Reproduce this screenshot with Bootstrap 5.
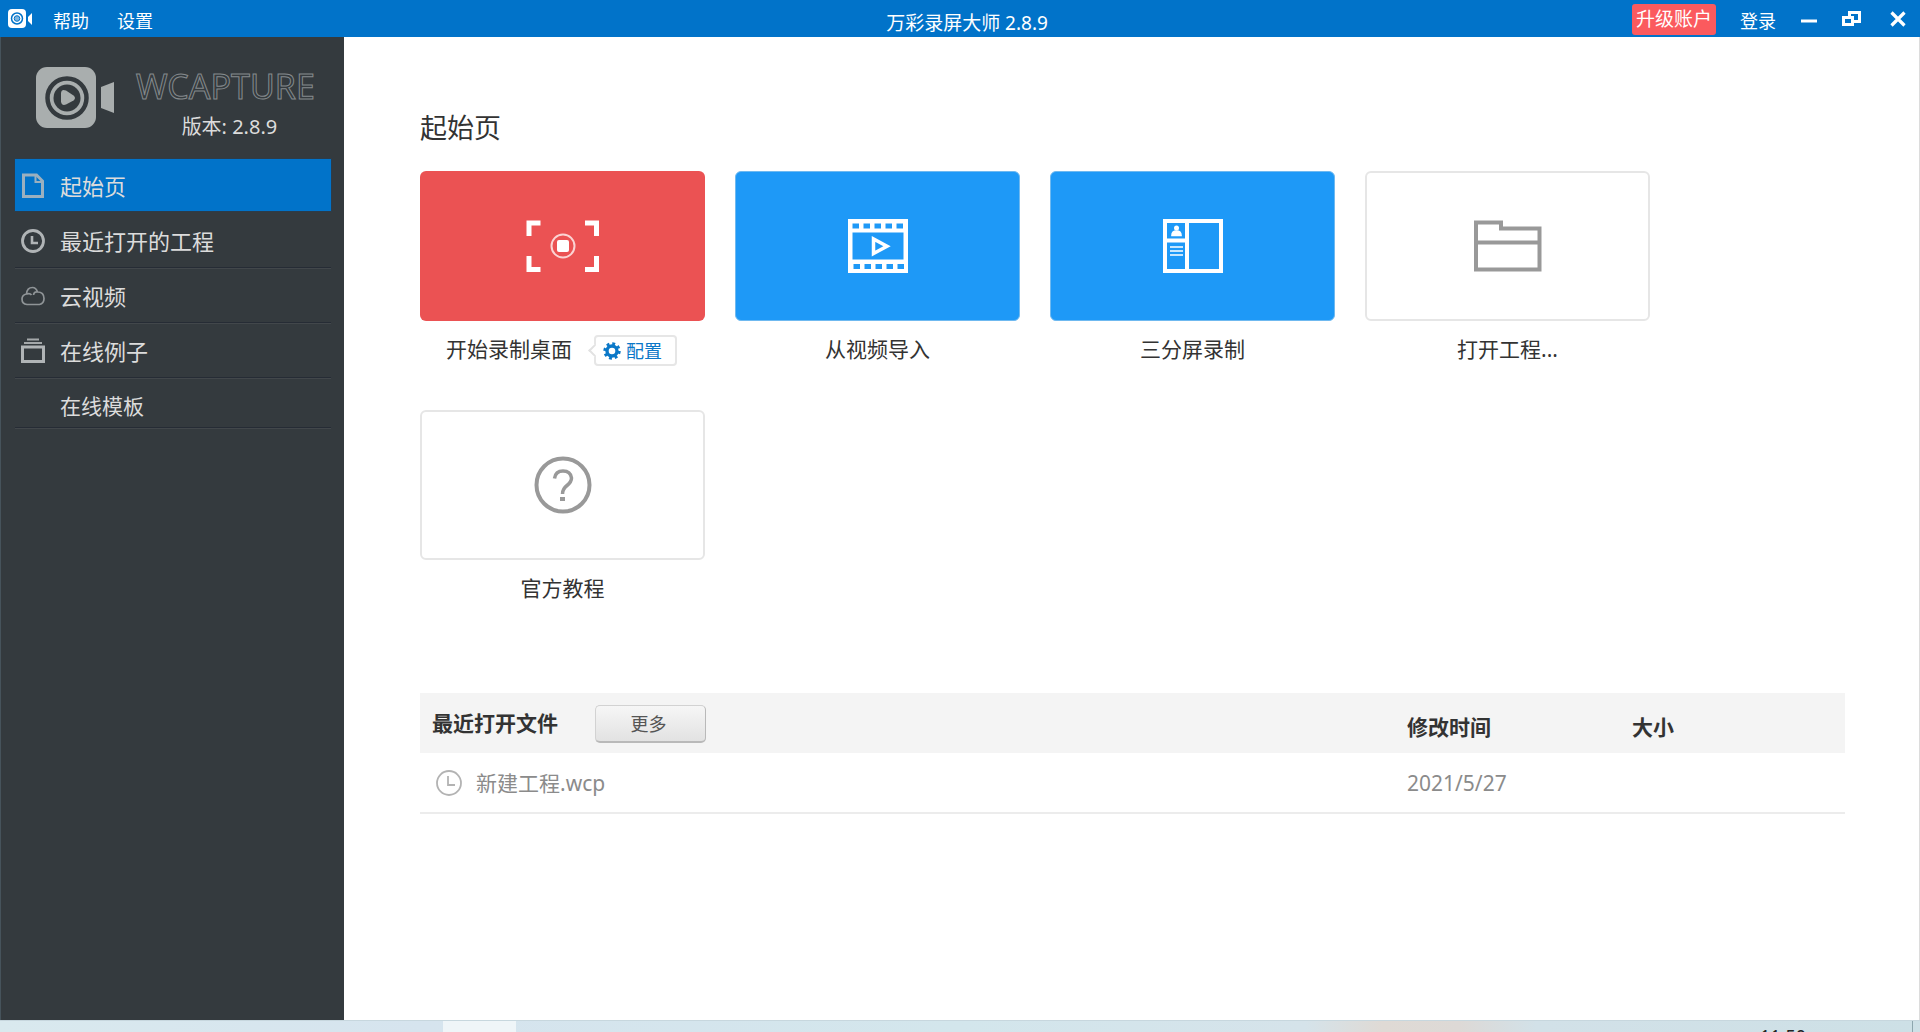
<!DOCTYPE html>
<html lang="zh-CN">
<head>
<meta charset="utf-8">
<meta name="viewport" content="width=device-width, initial-scale=1">
<title>万彩录屏大师 2.8.9</title>
<link href="https://cdn.jsdelivr.net/npm/bootstrap@5.3.0/dist/css/bootstrap.min.css" rel="stylesheet">
<style>
body{font-family:"Noto Sans","Noto Sans CJK SC",sans-serif;font-size:21px;color:#333;background:#fff;line-height:30px}
svg{display:block;flex:none}
button{font-family:inherit}
.titlebar{display:grid;grid-template-columns:1fr auto 1fr;align-items:center;height:37px;background:#0173c9;color:#fff;font-size:18px}
.titlebar a{color:#fff;text-decoration:none}
.titlebar .app-name{font-size:19px;padding:8px 0 0 14px}
.win-btn{background:none;border:0;padding:0;color:#fff}
.window-tools{padding-right:14px}
.upgrade{background:#fb5a5e;color:#fff;border:0;border-radius:3px;font-size:19px;line-height:31px;padding:0 4px;height:31px}
.sidebar{width:344px;flex:none;background:#343a3e;padding:30px 13px 0 14px;border-left:1px solid #46535b}
.brand{padding-left:21px;height:92px}
.brand-name{font-size:34px;line-height:38px;color:transparent;-webkit-text-stroke:1px #858a8d}
.version{font-size:20px;line-height:28px;padding-top:8px;color:#dcdcdc}
.side-link{display:flex;align-items:center;gap:15px;height:55px;padding:2px 0 0 6px;font-size:22px;color:#dcdcdc;text-decoration:none;border-bottom:1px solid #262c35;box-shadow:0 1px 0 #42474b}
.side-link svg{width:24px}
.side-link.on{height:52px;margin-bottom:2px;background:#0173c9;border:0;box-shadow:0 0 0 1px #2c3c4a}
.side-link.sub{height:50px;font-size:21px;padding:6px 0 0 45px}
.content{padding:68px 74px 0 76px;border-right:1px solid #dcdcdc}
.page-title{font-size:27px;line-height:46px;margin:0 0 20px;font-weight:400}
.tiles{display:flex;flex-wrap:wrap;gap:30px}
.tile{width:285px}
.tile-btn{display:flex;align-items:center;justify-content:center;width:100%;height:150px;border-radius:6px;border:2px solid #e6e6e6;background:#fff;color:#999}
.tile-btn.red{background:#eb5253;border:0;color:#fff}
.tile-btn.blue{background:#1e99f7;border:1px solid #6fb9f0;color:#fff}
.tile-label{display:flex;align-items:center;justify-content:center;gap:22px;height:59px;padding-bottom:3px}
.config{position:relative;display:flex;align-items:center;gap:5px;height:31px;width:83px;margin:3px 2px 0 0;padding:0 0 0 7px;border:2px solid #e6e6e6;border-radius:4px;background:#fff;color:#0b78c8;font-size:18px}
.config::before{content:"";position:absolute;left:-6px;top:9px;width:9px;height:9px;background:#fff;border:solid #e2e2e2;border-width:0 0 2px 2px;transform:rotate(45deg)}
.recent{margin-top:74px;width:100%;table-layout:fixed}
.recent th{background:#f4f4f4;height:60px;padding:0;vertical-align:middle}
.recent th.low{padding-top:8px}
.recent td{height:60px;padding:0;color:#8b8b8b;border-bottom:2px solid #ececec}
.recent-head{gap:37px;padding-left:12px}
.recent-file{gap:14px}
.c-date{width:225px}.c-size{width:213px}
.more{width:111px;height:38px;margin-top:2px;padding:0 10px 0 6px;border:1px solid #d2d2d2;border-right-color:#b9b9b9;border-bottom:2px solid #b9b9b9;border-radius:5px;background:linear-gradient(#f6f6f6,#e2e2e2);color:#555;font-size:18px;font-weight:400;line-height:30px}
.taskbar{height:12px;overflow:hidden;border-top:1px solid #c7d7de;background:linear-gradient(90deg,#d9e9ee,#d6e4ee 22%,#d3e6ec 50%,#d5e3ea 68%,#dfdad5 72%,#ddd9d6 76%,#d2e1e8 80%,#cde0e6)}
.task{width:73px;margin-left:443px;background:#eff5f8}
.clock{font-size:18px;line-height:22px;color:#222;padding:4px 106px 0 0;margin-right:7px;border-right:1px solid #8da6ae}
</style>
<script src="https://cdn.jsdelivr.net/npm/bootstrap@5.3.0/dist/js/bootstrap.bundle.min.js"></script>
</head>
<body class="d-flex flex-column min-vh-100">
<header class="titlebar">
  <nav class="d-flex align-items-center ps-2">
    <svg width="25" height="20" viewBox="0 0 25 20"><rect x="0" y="0" width="18" height="19" rx="4" fill="#fff"/><circle cx="9" cy="9.500" r="5.500" fill="none" stroke="#0173c9" stroke-width="1.500"/><circle cx="9" cy="9.500" r="2.800" fill="#7fb6e0" stroke="#0173c9"/><path d="M20 8l4-4v12l-4-4z" fill="#fff"/></svg>
    <a href="#" class="ms-3 ps-1 pt-1">帮助</a>
    <a href="#" class="ms-4 ps-1 pt-1">设置</a>
  </nav>
  <div class="app-name">万彩录屏大师 2.8.9</div>
  <div class="window-tools d-flex align-items-center justify-content-end">
    <button class="upgrade" type="button">升级账户</button>
    <a href="#" class="ms-4 pt-1 me-4">登录</a>
    <button class="win-btn" type="button" aria-label="最小化"><svg width="18" height="16" viewBox="0 0 18 16"><path d="M1 10h16" stroke="#fff" stroke-width="3"/></svg></button>
    <button class="win-btn ms-4" type="button" aria-label="还原"><svg width="20" height="16" viewBox="0 0 20 16"><path d="M7.500 5V1.500h10v9H12M1.500 6.500h9v7h-9z" fill="none" stroke="#fff" stroke-width="3"/></svg></button>
    <button class="win-btn ms-4 ps-1" type="button" aria-label="关闭"><svg width="16" height="16" viewBox="0 0 16 16"><path d="M1.500 1.500l13 13M14.500 1.500l-13 13" stroke="#fff" stroke-width="3.200"/></svg></button>
  </div>
</header>
<div class="d-flex flex-grow-1">
  <aside class="sidebar">
    <div class="brand d-flex">
      <svg width="80" height="62" viewBox="0 0 80 62"><rect x="0" y="0" width="60" height="61" rx="11" fill="#a9aeae"/><circle cx="31" cy="31" r="19.500" fill="none" stroke="#343a3e" stroke-width="4.500"/><circle cx="31" cy="31" r="13.500" fill="#343a3e"/><path d="M25 26q.5-4.500 5-2.500l7.500 5q3 2.500 0 5l-7.500 4q-4.500 1.500-5-3z" fill="#a9aeae"/><path d="M65 20l13-5v31l-13-5z" fill="#a9aeae"/></svg>
      <div class="ms-3 ps-1">
        <div class="brand-name">WCAPTURE</div>
        <div class="version text-center ps-2">版本: 2.8.9</div>
      </div>
    </div>
    <nav>
      <a class="side-link on" href="#"><svg width="24" height="26" viewBox="0 0 24 26"><path d="M2.500 2h13l6 6v15.500h-19z" fill="none" stroke="#9bb0bf" stroke-width="3"/><path d="M14.500 2v7h7" fill="none" stroke="#9bb0bf" stroke-width="2"/></svg>起始页</a>
      <a class="side-link" href="#"><svg height="26" viewBox="0 0 24 26"><circle cx="12" cy="13" r="10.500" fill="none" stroke="#b0b4b6" stroke-width="2.800"/><path d="M11 8v7h6" fill="none" stroke="#b0b4b6" stroke-width="2.600"/></svg>最近打开的工程</a>
      <a class="side-link" href="#"><svg height="20" viewBox="0 0 24 20"><path d="M6 18.500Q1 18 1 13q0-4 4.500-5Q6 1.500 11.500 1.500q3.500 0 5 4.500 6.500 0 6.500 6.500 0 5-4.500 6zM6 8q3-1 4.500 1M16.500 6q-3.500-.5-4 3" fill="none" stroke="#8f9497" stroke-width="1.700"/></svg>云视频</a>
      <a class="side-link" href="#"><svg height="26" viewBox="0 0 24 26"><path d="M6 1.500h12M3 5h18" stroke="#a4a8aa" stroke-width="1.800"/><path d="M1.500 9h21v14.500h-21z" fill="none" stroke="#b0b4b6" stroke-width="3"/></svg>在线例子</a>
      <a class="side-link sub" href="#">在线模板</a>
    </nav>
  </aside>
  <main class="content flex-grow-1">
    <h1 class="page-title">起始页</h1>
    <div class="tiles">
      <div class="tile">
        <button class="tile-btn red" type="button" aria-label="开始录制桌面"><svg width="74" height="52" viewBox="0 0 74 52"><path d="M3 16V3h11.500M59 3h11.500v13M3 36v13.500h11.500M59 49.500h11.500V36" fill="none" stroke="#fff" stroke-width="5"/><circle cx="37" cy="26" r="11.500" fill="none" stroke="#fbd3d3" stroke-width="2"/><rect x="31" y="20" width="12" height="12" rx="2" fill="#fff"/></svg></button>
        <div class="tile-label">开始录制桌面
          <button class="config" type="button"><svg width="18" height="18" viewBox="0 0 18 18"><circle cx="9" cy="9" r="5" fill="none" stroke="#0b78c8" stroke-width="3.400"/><circle cx="9" cy="9" r="7.200" fill="none" stroke="#0b78c8" stroke-width="3" stroke-dasharray="2.830 2.830"/></svg>配置</button>
        </div>
      </div>
      <div class="tile">
        <button class="tile-btn blue" type="button" aria-label="从视频导入"><svg width="60" height="54" viewBox="0 0 60 54"><rect width="60" height="54" fill="#fff"/><path d="M4.500 13.500h51v27h-51z" fill="#1e99f7"/><path d="M4.500 7h51M5.500 47.500h51" stroke="#1e99f7" stroke-width="5" stroke-dasharray="6.500 4.500"/><path d="M25.500 20v14.500L39 27.200z" fill="none" stroke="#fff" stroke-width="3.500"/></svg></button>
        <div class="tile-label">从视频导入</div>
      </div>
      <div class="tile">
        <button class="tile-btn blue" type="button" aria-label="三分屏录制"><svg width="60" height="54" viewBox="0 0 60 54"><path d="M2 2h56v50H2zM24 2v50M2 21.500h22" fill="none" stroke="#fff" stroke-width="4"/><circle cx="13.500" cy="9" r="2.500" fill="#fff"/><path d="M9 16.500q0-4.500 4.500-4.500t4.500 4.500zM7 28h13M7 32h13M7 36h13" fill="#fff" stroke="#fff" stroke-width="1.700"/></svg></button>
        <div class="tile-label">三分屏录制</div>
      </div>
      <div class="tile">
        <button class="tile-btn" type="button" aria-label="打开工程"><svg width="68" height="52" viewBox="0 0 68 52"><path d="M2 2.500h25v6h38.500v41H2zM2 22.500h64" fill="none" stroke="#999" stroke-width="4"/></svg></button>
        <div class="tile-label">打开工程...</div>
      </div>
      <div class="tile">
        <button class="tile-btn" type="button" aria-label="官方教程"><svg width="58" height="58" viewBox="0 0 58 58"><circle cx="29" cy="29" r="26.500" fill="none" stroke="#999" stroke-width="4"/><path d="M20.500 22.500q1-7.500 8.500-7.500t8.500 7q0 4-4.500 7.500t-4.500 8.500" fill="none" stroke="#999" stroke-width="3.500"/><path d="M26 41h5v4h-5z" fill="#999"/></svg></button>
        <div class="tile-label">官方教程</div>
      </div>
    </div>
    <table class="recent">
      <thead><tr>
        <th><div class="recent-head d-flex align-items-center">最近打开文件<button class="more" type="button">更多</button></div></th>
        <th class="c-date low">修改时间</th>
        <th class="c-size low">大小</th>
      </tr></thead>
      <tbody><tr>
        <td><div class="recent-file d-flex align-items-center ps-3"><svg width="26" height="26" viewBox="0 0 26 26"><circle cx="13" cy="13" r="12" fill="none" stroke="#b3b3b3" stroke-width="1.800"/><path d="M12 6v9h7" fill="none" stroke="#b3b3b3" stroke-width="1.800"/></svg>新建工程.wcp</div></td>
        <td>2021/5/27</td>
        <td></td>
      </tr></tbody>
    </table>
  </main>
</div>
<footer class="taskbar d-flex justify-content-between">
  <div class="task"></div>
  <div class="clock">11:50</div>
</footer>
</body>
</html>
